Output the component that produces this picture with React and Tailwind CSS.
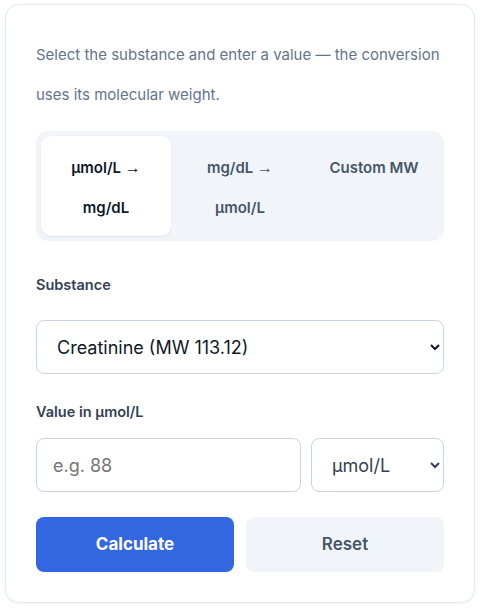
import React, { useState } from "react";

function Arrow() {
  return <span style={{ fontFamily: "'Liberation Sans', sans-serif" }} className="font-normal text-[16px]">→</span>;
}

export default function App() {
  const [tab, setTab] = useState(0);
  const tabs = [
    [<>μmol/L <Arrow /></>, "mg/dL"],
    [<>mg/dL <Arrow /></>, "μmol/L"],
    ["Custom MW"],
  ];
  return (
    <div
      className="pl-[5px] pt-[4px] pr-[20px] pb-[6px] bg-white"
      style={{ fontFamily: "Inter, 'Noto Sans', sans-serif" }}
    >
      <div className="w-[470px] border border-[#e2e8f0] rounded-[14px] bg-white p-[30px] shadow-[0_1px_3px_rgba(15,23,42,0.06)]">
        <p className="text-[15px] leading-[40px] text-[#64748b]">
          Select the substance and enter a value — the conversion uses its molecular weight.
        </p>

        <div className="mt-[16px] bg-[#f1f5f9] rounded-[12px] p-[5px] flex items-start gap-[4px]">
          {tabs.map((lines, i) => (
            <button
              key={i}
              onClick={() => setTab(i)}
              className={
                "flex-1 rounded-[10px] pt-[12px] pb-[8px] text-[15px] leading-[40px] font-semibold text-center " +
                (tab === i
                  ? "bg-white text-[#0f172a] shadow-[0_1px_2px_rgba(15,23,42,0.08)]"
                  : "text-[#475569]")
              }
            >
              {lines.map((l, j) => (
                <div key={j}>{l}</div>
              ))}
            </button>
          ))}
        </div>

        <label className="block mt-[34px] text-[14.5px] leading-[20px] font-semibold text-[#334155]">
          Substance
        </label>
        <select className="mt-[25px] w-full h-[54px] border border-[#cbd5e1] rounded-[8px] bg-white pl-[16px] pr-[8px] text-[18px] text-[#111827]">
          <option>Creatinine (MW 113.12)</option>
          <option>Urea (MW 60.06)</option>
          <option>Glucose (MW 180.16)</option>
        </select>

        <label className="block mt-[28px] text-[14.5px] leading-[20px] font-semibold text-[#334155]">
          Value in μmol/L
        </label>
        <div className="mt-[16px] flex gap-[10px]">
          <input
            placeholder="e.g. 88"
            className="w-[265px] h-[54px] border border-[#cbd5e1] rounded-[8px] px-[16px] text-[18px] text-[#111827] placeholder:text-[#757575] outline-none"
          />
          <select className="flex-1 h-[54px] border border-[#cbd5e1] rounded-[8px] bg-white pl-[16px] pr-[8px] text-[18px] text-[#374151]">
            <option>μmol/L</option>
            <option>mg/dL</option>
          </select>
        </div>

        <div className="mt-[25px] flex gap-[12px]">
          <button className="flex-1 h-[55px] rounded-[8px] bg-[#3366e1] text-white text-[17px] font-bold">
            Calculate
          </button>
          <button className="flex-1 h-[55px] rounded-[8px] bg-[#f1f5f9] text-[#475569] text-[17px] font-semibold">
            Reset
          </button>
        </div>
      </div>
    </div>
  );
}
